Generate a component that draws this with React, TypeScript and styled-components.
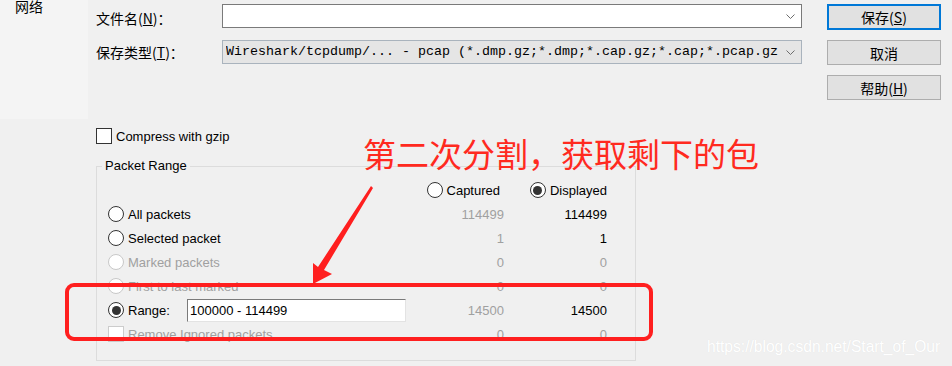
import { Fragment } from "react";
import styled, { createGlobalStyle } from "styled-components";

const GlobalStyle = createGlobalStyle`
  html, body {
    margin: 0;
    padding: 0;
    background: #f0f0f0;
  }
  body {
    font-family: "Liberation Sans", Arial, sans-serif;
  }
  * {
    box-sizing: border-box;
  }
`;

const CJK = `"Noto Sans CJK SC", "Liberation Sans", sans-serif`;

const Page = styled.div`
  position: relative;
  width: 952px;
  height: 366px;
  overflow: hidden;
  background: #f0f0f0;
  color: #000;
`;

const TopArea = styled.div`
  display: flex;
  align-items: flex-start;
`;

const NavPane = styled.div`
  width: 88px;
  height: 119px;
  background: #f4f4f4;
  padding-left: 15px;
`;

const NavItem = styled.div`
  margin-top: -2px;
  font: 14px/16px ${CJK};
`;

const FormGrid = styled.div`
  display: grid;
  grid-template-columns: 126px 580px;
  grid-auto-rows: 24px;
  row-gap: 12px;
  align-items: center;
  padding: 4px 0 0 8px;
`;

const FieldLabel = styled.label<{ $shift?: number }>`
  font: 14px/24px ${CJK};
  padding-top: ${(p) => p.$shift ?? 0}px;
  white-space: nowrap;
`;

const Combo = styled.div<{ $editable?: boolean }>`
  display: flex;
  align-items: center;
  height: 24px;
  padding: 0 6px 0 3px;
  background: ${(p) => (p.$editable ? "#fff" : "#e5e5e5")};
  border: 1px solid ${(p) => (p.$editable ? "#7a7a7a" : "#a9b3bd")};
`;

const ComboText = styled.span`
  flex: 1;
  overflow: hidden;
  white-space: nowrap;
  font: 13.33px/22px "Liberation Mono", "DejaVu Sans Mono", monospace;
`;

const Chevron = () => (
  <svg width="9" height="5" viewBox="0 0 9 5" style={{ flexShrink: 0 }}>
    <polyline points="0.5,0.5 4.5,4.5 8.5,0.5" fill="none" stroke="#6d6d6d" strokeWidth="1" />
  </svg>
);

const ButtonColumn = styled.div`
  display: flex;
  flex-direction: column;
  gap: 10px;
  margin-left: 25px;
  padding-top: 4px;
`;

const DialogButton = styled.button<{ $primary?: boolean }>`
  width: 114px;
  height: ${(p) => (p.$primary ? 26 : 25)}px;
  padding: 0;
  background: #e1e1e1;
  border: ${(p) => (p.$primary ? "2px solid #0078d7" : "1px solid #adadad")};
  color: #000;
  font: 14px/20px ${CJK};
`;

const Options = styled.div`
  padding: 9px 0 0 96px;
  font-size: 13px;
`;

const CheckRow = styled.div<{ $disabled?: boolean }>`
  display: flex;
  align-items: center;
  gap: 4px;
  height: 16px;
  color: ${(p) => (p.$disabled ? "#a0a0a0" : "#000")};
  white-space: nowrap;
`;

const CheckBox = styled.span<{ $disabled?: boolean }>`
  width: 16px;
  height: 16px;
  flex-shrink: 0;
  background: #fff;
  border: 1px solid ${(p) => (p.$disabled ? "#cccccc" : "#333")};
`;

const GroupBox = styled.fieldset`
  width: 540px;
  height: 203px;
  margin: 14px 0 0 0;
  padding: 4px 0 0 11px;
  border: 1px solid #dcdcdc;
`;

const GroupTitle = styled.legend`
  margin-left: -6px;
  padding: 0 3px;
  font-size: 13px;
  line-height: 16px;
`;

const RangeTable = styled.div`
  display: grid;
  grid-template-columns: 312px 84px 103px;
  grid-auto-rows: 24px;
  align-items: center;
`;

const HeadCell = styled.div<{ $pad?: number }>`
  display: flex;
  align-items: center;
  justify-content: flex-end;
  gap: 4px;
  padding-right: ${(p) => p.$pad ?? 0}px;
`;

const OptionCell = styled.div<{ $disabled?: boolean }>`
  display: flex;
  align-items: center;
  gap: 4px;
  white-space: nowrap;
  color: ${(p) => (p.$disabled ? "#a0a0a0" : "#000")};
`;

const Radio = styled.span<{ $checked?: boolean; $disabled?: boolean }>`
  width: 16px;
  height: 16px;
  flex-shrink: 0;
  border-radius: 50%;
  background: #fff;
  border: 1px solid ${(p) => (p.$disabled ? "#c8c8c8" : "#333")};
  display: inline-flex;
  align-items: center;
  justify-content: center;

  &::after {
    content: "";
    display: ${(p) => (p.$checked ? "block" : "none")};
    width: 9px;
    height: 9px;
    border-radius: 50%;
    background: #333;
  }
`;

const RangeLabel = styled.span`
  width: 55px;
`;

const RangeInput = styled.div`
  width: 219px;
  height: 23px;
  padding-left: 2px;
  background: #fff;
  border: 1px solid #e3e3e3;
  border-top-color: #7a7a7a;
  border-left-color: #7a7a7a;
  font-size: 13px;
  line-height: 21px;
  color: #000;
`;

const Count = styled.div<{ $muted?: boolean }>`
  text-align: right;
  color: ${(p) => (p.$muted ? "#a0a0a0" : "#000")};
`;

const Callout = styled.div`
  position: absolute;
  left: 363px;
  top: 135px;
  font: 33px/36px ${CJK};
  color: #ff2a1f;
  white-space: nowrap;
`;

const Highlight = styled.div`
  position: absolute;
  left: 65px;
  top: 283px;
  width: 588px;
  height: 58px;
  border: 4px solid #ff1f1f;
  border-radius: 9px;
`;

const ArrowLayer = styled.svg`
  position: absolute;
  left: 0;
  top: 0;
  pointer-events: none;
`;

const Watermark = styled.div`
  position: absolute;
  left: 707px;
  top: 338px;
  font: 15.6px/18px "Liberation Sans", Arial, sans-serif;
  color: #fff;
  text-shadow: 0 0 1px rgba(0, 0, 0, 0.08);
  white-space: nowrap;
`;

type Row = {
  label: string;
  captured: string;
  displayed: string;
  disabled?: boolean;
};

const rows: Row[] = [
  { label: "All packets", captured: "114499", displayed: "114499" },
  { label: "Selected packet", captured: "1", displayed: "1" },
  { label: "Marked packets", captured: "0", displayed: "0", disabled: true },
  { label: "First to last marked", captured: "0", displayed: "0", disabled: true },
];

export default function App() {
  return (
    <Page>
      <GlobalStyle />
      <TopArea>
        <NavPane>
          <NavItem>网络</NavItem>
        </NavPane>
        <FormGrid>
          <FieldLabel $shift={3}>
            文件名(<u>N</u>)：
          </FieldLabel>
          <Combo $editable>
            <ComboText />
            <Chevron />
          </Combo>
          <FieldLabel>
            保存类型(<u>T</u>)：
          </FieldLabel>
          <Combo>
            <ComboText>
              Wireshark/tcpdump/... - pcap (*.dmp.gz;*.dmp;*.cap.gz;*.cap;*.pcap.gz
            </ComboText>
            <Chevron />
          </Combo>
        </FormGrid>
        <ButtonColumn>
          <DialogButton $primary>
            保存(<u>S</u>)
          </DialogButton>
          <DialogButton>取消</DialogButton>
          <DialogButton>
            帮助(<u>H</u>)
          </DialogButton>
        </ButtonColumn>
      </TopArea>

      <Options>
        <CheckRow>
          <CheckBox />
          Compress with gzip
        </CheckRow>
        <GroupBox>
          <GroupTitle>Packet Range</GroupTitle>
          <RangeTable>
            <div />
            <HeadCell $pad={4}>
              <Radio />
              Captured
            </HeadCell>
            <HeadCell>
              <Radio $checked />
              Displayed
            </HeadCell>

            {rows.map((r) => (
              <Fragment key={r.label}>
                <OptionCell $disabled={r.disabled}>
                  <Radio $disabled={r.disabled} />
                  {r.label}
                </OptionCell>
                <Count $muted>{r.captured}</Count>
                <Count $muted={r.disabled}>{r.displayed}</Count>
              </Fragment>
            ))}

            <OptionCell>
              <Radio $checked />
              <RangeLabel>Range:</RangeLabel>
              <RangeInput>100000 - 114499</RangeInput>
            </OptionCell>
            <Count $muted>14500</Count>
            <Count>14500</Count>

            <OptionCell $disabled>
              <CheckBox $disabled />
              Remove Ignored packets
            </OptionCell>
            <Count $muted>0</Count>
            <Count $muted>0</Count>
          </RangeTable>
        </GroupBox>
      </Options>

      <Callout>第二次分割，获取剩下的包</Callout>
      <Highlight />
      <ArrowLayer width="952" height="366" viewBox="0 0 952 366">
        <polygon
          points="371,186 373,188 324,270 332,274 313,284 313,263 318,267"
          fill="#ff1f1f"
        />
      </ArrowLayer>
      <Watermark>https://blog.csdn.net/Start_of_Our</Watermark>
    </Page>
  );
}
